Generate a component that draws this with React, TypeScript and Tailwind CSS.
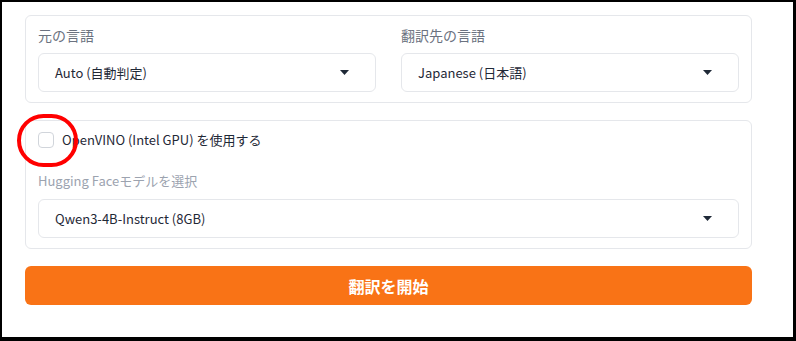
const font = { fontFamily: '"Noto Sans CJK JP", "Noto Sans", sans-serif' };

function Caret() {
  return (
    <svg width="9" height="5" viewBox="0 0 9 5" className="shrink-0">
      <path d="M0 0h9L4.5 5z" fill="#1f2937" />
    </svg>
  );
}

function Select({ value }: { value: string }) {
  return (
    <div className="flex h-[39px] items-center justify-between rounded-md border border-[#e5e7eb] bg-white pl-4 pr-[26px] text-[13px] text-[#1f2937]">
      <span>{value}</span>
      <Caret />
    </div>
  );
}

export default function App() {
  return (
    <div
      className="h-[341px] w-[796px] border-b-4 border-l-2 border-r-[3px] border-t-2 border-black bg-white pl-[23px] pr-[41px] pt-[13px]"
      style={font}
    >
      {/* 言語 */}
      <div className="grid grid-cols-2 gap-[25px] rounded-md border border-[#e5e7eb] px-3 pb-[10px] pt-[9px]">
        <div>
          <p className="mb-2 text-sm leading-5 text-[#6b7280]">元の言語</p>
          <Select value="Auto (自動判定)" />
        </div>
        <div>
          <p className="mb-2 text-sm leading-5 text-[#6b7280]">翻訳先の言語</p>
          <Select value="Japanese (日本語)" />
        </div>
      </div>

      {/* モデル */}
      <div className="mt-[17px] rounded-md border border-[#e5e7eb] px-3 pb-[10px] pt-[9px]">
        <div className="relative flex items-center gap-2 leading-5">
          <span className="h-4 w-4 rounded border border-[#d1d5db] bg-white" />
          <span className="text-[13px] text-[#1f2937]">OpenVINO (Intel GPU) を使用する</span>
          <span className="pointer-events-none absolute left-[-21px] top-[-16px] h-[53px] w-[61px] rounded-full border-4 border-[#ff0000]" />
        </div>
        <p className="mb-2 mt-[21px] text-[13px] leading-5 text-[#9ca3af]">Hugging Faceモデルを選択</p>
        <Select value="Qwen3-4B-Instruct (8GB)" />
      </div>

      <button className="mt-[17px] flex h-[39px] w-full items-center justify-center rounded-md bg-[#f97316] text-base font-bold text-white">
        翻訳を開始
      </button>
    </div>
  );
}
